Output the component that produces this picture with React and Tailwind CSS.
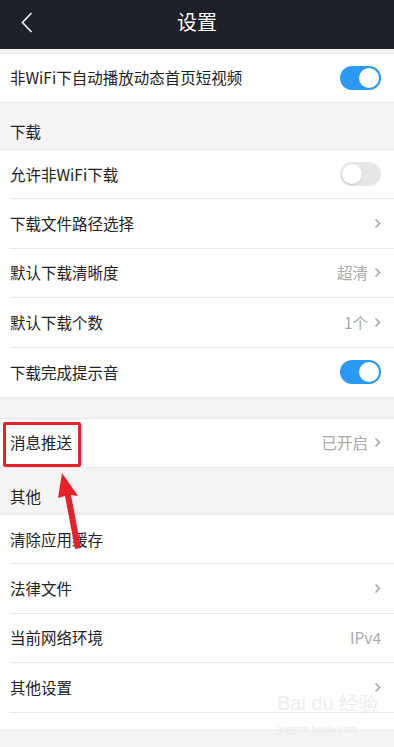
import React from 'react';

const font = { fontFamily: '"Noto Sans CJK SC", "Noto Sans", sans-serif' };

const Toggle = ({ on }) => (
  <div
    className={`relative w-[41px] h-[24px] rounded-full ${on ? 'bg-[#2c9af5]' : 'bg-[#e6e6e6]'}`}
  >
    <div
      className={`absolute top-[2px] w-[20px] h-[20px] rounded-full bg-white ${on ? 'right-[2px]' : 'left-[2px] shadow-[0_1px_2px_rgba(0,0,0,0.15)]'}`}
    />
  </div>
);

const Chevron = () => (
  <svg width="7" height="11" viewBox="0 0 7 11" className="ml-[6px]">
    <path d="M1.5 1.5 L5.5 5.5 L1.5 9.5" fill="none" stroke="#a8a8a8" strokeWidth="1.6" />
  </svg>
);

const Row = ({ label, value, chevron, toggle, last, single }) => (
  <div className="bg-white pl-[10px]">
    <div
      className={`${single ? 'h-[48px]' : 'h-[49.4px]'} flex items-center pr-[13px] ${last ? '' : 'border-b border-[#e8e8e8]'}`}
    >
      <span className="flex-1 text-[15.5px] text-[#222]">{label}</span>
      {value && <span className="text-[15.5px] text-[#aaaaaa]">{value}</span>}
      {chevron && <Chevron />}
      {toggle !== undefined && <Toggle on={toggle} />}
    </div>
  </div>
);

const SectionHeader = ({ title }) => (
  <div className="h-[48px] flex items-end pl-[10px] pb-[6px] text-[15.5px] text-[#222] border-t border-b border-[#e8e8e8]">
    {title}
  </div>
);

export default function App() {
  return (
    <div className="relative w-[394px] h-[747px] overflow-hidden bg-[#f4f4f4]" style={font}>
      {/* top bar */}
      <div className="h-[49px] bg-[#1e2129] flex items-center justify-center relative">
        <svg width="12" height="21" viewBox="0 0 12 21" className="absolute left-[21px] top-[12px]">
          <path d="M10.5 1 L1.5 10.5 L10.5 20" fill="none" stroke="#e8e8e8" strokeWidth="1.8" />
        </svg>
        <span className="text-white text-[20px] -mt-[5px]">设置</span>
      </div>
      <div className="h-[5px] border-b border-[#e8e8e8]" />

      <Row label="非WiFi下自动播放动态首页短视频" toggle={true} last single />

      <SectionHeader title="下载" />
      <Row label="允许非WiFi下载" toggle={false} />
      <Row label="下载文件路径选择" chevron />
      <Row label="默认下载清晰度" value="超清" chevron />
      <Row label="默认下载个数" value="1个" chevron />
      <Row label="下载完成提示音" toggle={true} last />

      <div className="h-[22px] border-t border-b border-[#e8e8e8]" />
      <Row label="消息推送" value="已开启" chevron last single />

      <SectionHeader title="其他" />
      <Row label="清除应用缓存" />
      <Row label="法律文件" chevron />
      <Row label="当前网络环境" value="IPv4" />
      <Row label="其他设置" chevron />
      <div className="h-[16px] bg-white" />

      {/* annotation */}
      <div className="absolute left-[3px] top-[422px] w-[78px] h-[45px] border-[3px] border-[#e8202b] rounded-[2px]" />
      <svg width="40" height="90" viewBox="0 0 40 90" className="absolute left-[50px] top-[470px]">
        <path d="M12 3 L28 26 L21 25 L31 78 L25 79 L15 26 L8 28 Z" fill="#e8202b" />
      </svg>

      {/* watermark */}
      <div className="absolute left-[277px] top-[693px] text-[20px] text-[#e2e2e2] opacity-60 leading-none" style={{ fontFamily: '"Liberation Sans", sans-serif' }}>
        Bai du 经验
      </div>
      <div className="absolute left-[277px] top-[722px] text-[10px] text-[#e2e2e2] opacity-60" style={{ fontFamily: '"Liberation Sans", sans-serif' }}>
        jingyan.baidu.com
      </div>
    </div>
  );
}
